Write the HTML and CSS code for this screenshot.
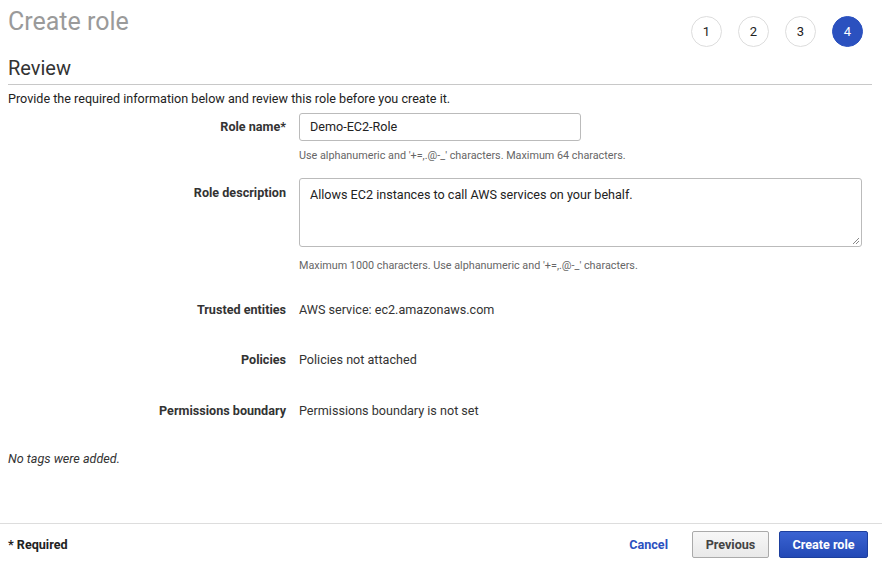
FILE: index.html
```html
<!DOCTYPE html>
<html>
<head>
<meta charset="utf-8">
<link rel="stylesheet" href="styles.css">
</head>
<body>
<div class="page">
  <div class="top">
    <h1 class="title">Create role</h1>
    <div class="steps">
      <span class="step">1</span>
      <span class="step">2</span>
      <span class="step">3</span>
      <span class="step active">4</span>
    </div>
  </div>
  <h2 class="section">Review</h2>
  <p class="intro">Provide the required information below and review this role before you create it.</p>
  <div class="form">
    <div class="label l-name">Role name*</div>
    <div class="field">
      <div class="input">Demo-EC2-Role</div>
      <div class="help">Use alphanumeric and '+=,.@-_' characters. Maximum 64 characters.</div>
    </div>
    <div class="label l-desc">Role description</div>
    <div class="field field-desc">
      <div class="textarea">Allows EC2 instances to call AWS services on your behalf.
        <svg class="grip" width="8" height="8" viewBox="0 0 8 8"><path d="M7 1L1 7M7 4L4 7" stroke="#888" stroke-width="1" fill="none"/></svg>
      </div>
      <div class="help">Maximum 1000 characters. Use alphanumeric and '+=,.@-_' characters.</div>
    </div>
    <div class="label row">Trusted entities</div>
    <div class="value row">AWS service: ec2.amazonaws.com</div>
    <div class="label row">Policies</div>
    <div class="value row">Policies not attached</div>
    <div class="label row last">Permissions boundary</div>
    <div class="value row last">Permissions boundary is not set</div>
  </div>
  <p class="notags">No tags were added.</p>
</div>
<div class="footer">
  <span class="req">* Required</span>
  <div class="actions">
    <a class="cancel">Cancel</a>
    <button class="btn prev">Previous</button>
    <button class="btn primary">Create role</button>
  </div>
</div>
</body>
</html>
```
FILE: styles.css
```css
html, body {
  margin: 0;
  padding: 0;
  background: #fff;
  font-family: Roboto, "Liberation Sans", sans-serif;
  color: #222;
  font-size: 12.6px;
}
.page {
  padding: 0 10px 0 8px;
  height: 523px;
  box-sizing: border-box;
}
.top {
  display: flex;
  justify-content: space-between;
  align-items: flex-start;
  height: 54px;
}
.title {
  margin: 0;
  padding-top: 6px;
  font-size: 25px;
  font-weight: 400;
  color: #9a9a9a;
  line-height: 32px;
}
.steps {
  display: flex;
  gap: 16px;
  padding-top: 16px;
  padding-right: 9px;
}
.step {
  width: 29px;
  height: 29px;
  border: 1px solid #ddd;
  border-radius: 50%;
  display: flex;
  align-items: center;
  justify-content: center;
  font-size: 13px;
  color: #222;
}
.step.active {
  background: #2b51bf;
  border-color: #2b51bf;
  color: #fff;
}
.section {
  margin: 0;
  font-size: 20px;
  font-weight: 400;
  color: #333;
  line-height: 28px;
  padding-bottom: 2px;
  border-bottom: 1px solid #c8c8c8;
}
.intro {
  margin: 6px 0 0;
  line-height: 16px;
}
.form {
  display: grid;
  grid-template-columns: 278px 1fr;
  column-gap: 13px;
  margin-top: 6px;
}
.label {
  text-align: right;
  font-weight: 700;
  color: #333;
}
.l-name {
  padding-top: 6px;
}
.l-desc {
  padding-top: 7px;
}
.input {
  width: 282px;
  height: 28px;
  box-sizing: border-box;
  border: 1px solid #bbb;
  border-radius: 3px;
  padding: 5px 10px;
  color: #222;
  line-height: 16px;
}
.textarea {
  position: relative;
  width: 563px;
  height: 69px;
  box-sizing: border-box;
  border: 1px solid #bbb;
  border-radius: 3px;
  padding: 8px 10px;
  color: #222;
  line-height: 16px;
}
.grip {
  position: absolute;
  right: 1px;
  bottom: 1px;
}
.help {
  font-size: 10.8px;
  color: #666;
  margin-top: 8px;
  line-height: 13px;
  margin-bottom: 16px;
}
.field-desc .help {
  margin-top: 12px;
}
.row {
  line-height: 16px;
}
.form .label.row, .form .value.row {
  margin-top: 14px;
  margin-bottom: 20px;
}
.form .label.row.last, .form .value.row.last {
  margin-top: 15px;
}
.value {
  color: #333;
}
.notags {
  margin: 12px 0 0;
  font-style: italic;
  color: #333;
  font-size: 12.6px;
}
.footer {
  border-top: 1px solid #ddd;
  display: flex;
  justify-content: space-between;
  align-items: center;
  padding: 7px 14px 3px 8px;
  height: 38px;
  box-sizing: border-box;
}
.req {
  font-weight: 700;
  font-size: 12.6px;
  color: #222;
}
.actions {
  display: flex;
  align-items: center;
}
.cancel {
  color: #2b51bf;
  font-weight: 700;
  font-size: 12.6px;
  margin-right: 24px;
}
.btn {
  font-family: Roboto, "Liberation Sans", sans-serif;
  font-weight: 700;
  font-size: 12.6px;
  height: 27px;
  border-radius: 2px;
  padding: 0 8px;
  cursor: pointer;
}
.prev {
  background: linear-gradient(#f7f7f7, #e9e9e9);
  border: 1px solid #aaa;
  color: #444;
  width: 77px;
  margin-right: 10px;
}
.primary {
  background: linear-gradient(#3a63d2, #2349b6);
  border: 1px solid #1d3f9e;
  color: #fff;
  width: 89px;
}
```
